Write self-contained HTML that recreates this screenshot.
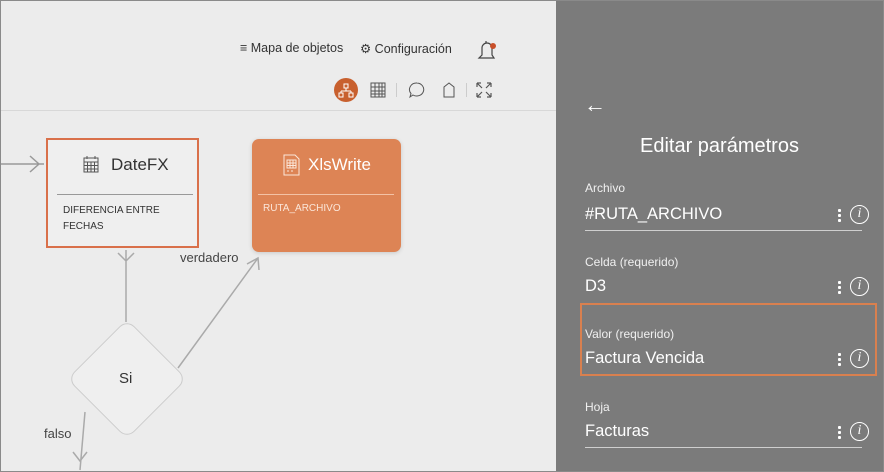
<!DOCTYPE html>
<html><head><meta charset="utf-8"><style>
*{margin:0;padding:0;box-sizing:border-box}
body{width:884px;height:472px;overflow:hidden;font-family:"Liberation Sans",sans-serif;position:relative;background:#ececec}
.frame{position:absolute;inset:0;border:1px solid #8a8a8a;z-index:10;pointer-events:none}
.left{position:absolute;left:0;top:0;width:556px;height:472px;background:#ececec}
.t{position:absolute;white-space:nowrap}
.right{position:absolute;left:556px;top:0;width:328px;height:472px;background:#7b7b7b;color:#fff}
.lbl{position:absolute;left:29px;font-size:12px;color:#f0f0f0}
.val{position:absolute;left:29px;font-size:16.5px;color:#fff}
.ln{position:absolute;left:29px;width:277px;height:1px;background:#cfcfcf}
.dots{position:absolute;left:282px;width:3px}
.dots i{display:block;width:3px;height:3px;background:#fff;margin-bottom:2px;border-radius:1px}
.info{position:absolute;left:294px;width:19px;height:19px;border:1.5px solid #fff;border-radius:50%;font:italic 14px "Liberation Serif",serif;text-align:center;line-height:16px}
</style></head><body>
<div class="left">
 <div class="t" style="left:240px;top:41px;font-size:12.5px;color:#333">≡ Mapa de objetos</div>
 <div class="t" style="left:360px;top:41px;font-size:12.5px;color:#333">⚙ Configuración</div>
 <svg style="position:absolute;left:474px;top:38px" width="26" height="24"><path d="M5 20h15l-2-3V10a5 5 0 0 0-10 0v7z M12 3v2" fill="none" stroke="#444" stroke-width="1.2"/><circle cx="19" cy="8" r="3" fill="#c8502a"/></svg>
 <div style="position:absolute;left:334px;top:78px;width:24px;height:24px;border-radius:50%;background:#c8602e"></div>
 <svg style="position:absolute;left:334px;top:78px" width="24" height="24"><path d="M10 6h4v4h-4z M12 10v3 M7 13h10 M7 13v2 M17 13v2 M5 15h4v4H5z M15 15h4v4h-4z" fill="none" stroke="#fff" stroke-width="1"/></svg>
 <svg style="position:absolute;left:369px;top:81px" width="18" height="18"><path d="M2 2h14v14H2z M2 6h14 M2 10h14 M2 13h14 M6 2v14 M10 2v14 M13 2v14" fill="none" stroke="#555" stroke-width="1"/></svg>
 <div style="position:absolute;left:396px;top:83px;width:1px;height:14px;background:#ccc"></div>
 <svg style="position:absolute;left:408px;top:81px" width="18" height="18"><path d="M9 2a7 6.5 0 1 1-4 12l-3 2 1-3.5A7 6.5 0 0 1 9 2z" fill="none" stroke="#555" stroke-width="1"/></svg>
 <svg style="position:absolute;left:442px;top:81px" width="14" height="18"><path d="M2 16V6l5-4 5 4v10z" fill="none" stroke="#555" stroke-width="1"/></svg>
 <div style="position:absolute;left:466px;top:83px;width:1px;height:14px;background:#ccc"></div>
 <svg style="position:absolute;left:476px;top:82px" width="16" height="16"><path d="M1 1l5 5 M1 1h4 M1 1v4 M15 1l-5 5 M15 1h-4 M15 1v4 M1 15l5-5 M1 15h4 M1 15v-4 M15 15l-5-5 M15 15h-4 M15 15v-4" fill="none" stroke="#555" stroke-width="1.2"/></svg>
 <div style="position:absolute;left:0;top:110px;width:556px;height:1px;background:#d8d8d8"></div>

 <svg style="position:absolute;left:0;top:0" width="556" height="472">
  <path d="M0 164H44 M30 156l9 8-9 8" fill="none" stroke="#999" stroke-width="1.5"/>
  <path d="M126 250V322 M118 253l8 8 8-8" fill="none" stroke="#aaa" stroke-width="1.5"/>
  <path d="M178 368L258 258 M247 264l11-6 1 12" fill="none" stroke="#aaa" stroke-width="1.5"/>
  <path d="M85 412L80 470 M73 452l7 9 7-9" fill="none" stroke="#aaa" stroke-width="1.5"/>
  <rect x="85" y="337" width="84" height="84" rx="10" transform="rotate(45 127 379)" fill="#efefef" stroke="#ccc"/>
 </svg>
 <div class="t" style="left:119px;top:370px;font-size:15px;color:#333">Si</div>
 <div class="t" style="left:180px;top:250px;font-size:13px;color:#444">verdadero</div>
 <div class="t" style="left:44px;top:426px;font-size:13px;color:#444">falso</div>

 <div style="position:absolute;left:46px;top:138px;width:153px;height:110px;border:2px solid #d9704a;background:#efefef"></div>
 <svg style="position:absolute;left:83px;top:155px" width="16" height="18"><path d="M1 3h14v14H1z M1 7h14 M1 10.5h14 M1 14h14 M4.5 7v10 M8 7v10 M11.5 7v10 M4 1v3 M12 1v3" fill="none" stroke="#555" stroke-width="1"/></svg>
 <div class="t" style="left:111px;top:155px;font-size:17px;color:#333">DateFX</div>
 <div style="position:absolute;left:57px;top:194px;width:136px;height:1px;background:#999"></div>
 <div class="t" style="left:63px;top:203px;font-size:10px;color:#333;line-height:16px">DIFERENCIA ENTRE<br>FECHAS</div>

 <div style="position:absolute;left:252px;top:139px;width:149px;height:113px;border-radius:7px;background:#dd8455;box-shadow:0 1px 4px rgba(0,0,0,.15)"></div>
 <svg style="position:absolute;left:282px;top:154px" width="20" height="22"><path d="M2 1h11l4 4v16H2z M5 6h9v8H5z M5 9h9 M5 11.5h9 M8 6v8 M11 6v8 M5 17h2 M9 17h2" fill="none" stroke="#fbe6d9" stroke-width="1"/></svg>
 <div class="t" style="left:308px;top:155px;font-size:17px;color:#fff">XlsWrite</div>
 <div style="position:absolute;left:258px;top:194px;width:136px;height:1px;background:#f3c2a5"></div>
 <div class="t" style="left:263px;top:203px;font-size:10px;color:#fbe6d9">RUTA_ARCHIVO</div>
</div>

<div class="right">
 <div class="t" style="left:28px;top:92px;font-size:22px;color:#fff">←</div>
 <div class="t" style="left:84px;top:135px;font-size:20px;color:#fff">Editar parámetros</div>

 <div class="lbl" style="top:181px">Archivo</div>
 <div class="val" style="top:205px">#RUTA_ARCHIVO</div>
 <div class="dots" style="top:209px"><i></i><i></i><i></i></div>
 <div class="info" style="top:205px">i</div>
 <div class="ln" style="top:230px"></div>

 <div class="lbl" style="top:255px">Celda (requerido)</div>
 <div class="val" style="top:277px">D3</div>
 <div class="dots" style="top:281px"><i></i><i></i><i></i></div>
 <div class="info" style="top:277px">i</div>

 <div style="position:absolute;left:24px;top:303px;width:297px;height:73px;border:2px solid #d9804f"></div>
 <div class="lbl" style="top:327px">Valor (requerido)</div>
 <div class="val" style="top:349px">Factura Vencida</div>
 <div class="dots" style="top:353px"><i></i><i></i><i></i></div>
 <div class="info" style="top:349px">i</div>

 <div class="lbl" style="top:400px">Hoja</div>
 <div class="val" style="top:422px">Facturas</div>
 <div class="dots" style="top:426px"><i></i><i></i><i></i></div>
 <div class="info" style="top:422px">i</div>
 <div class="ln" style="top:447px"></div>
</div>
<div class="frame"></div>
</body></html>
